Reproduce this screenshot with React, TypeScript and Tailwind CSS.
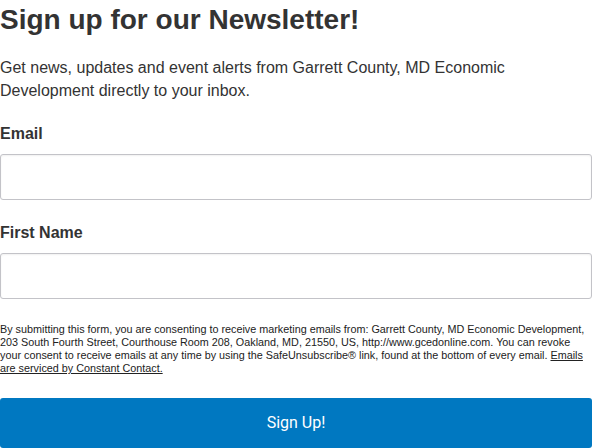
export default function App() {
  return (
    <div className="w-[592px] h-[448px] overflow-hidden bg-white text-[#333] font-['Liberation_Sans',Arial,sans-serif]">
      {/* heading */}
      <h1 className="text-[28px] font-bold leading-[34px] pt-[3px]">
        Sign up for our Newsletter!
      </h1>
      <p className="text-[16px] leading-[23px] mt-[19px] pr-[60px]">
        Get news, updates and event alerts from Garrett County, MD Economic Development directly to your inbox.
      </p>

      {/* fields */}
      <div className="mt-[22px]">
        <label className="block text-[16px] font-bold leading-[20px]">Email</label>
        <input
          type="email"
          className="block w-[592px] h-[46px] mt-[10px] border border-[#c3c3c8] rounded-[3px] bg-white shadow-[inset_0_1px_2px_rgba(0,0,0,0.06)] px-3 outline-none"
        />
      </div>
      <div className="mt-[23px]">
        <label className="block text-[16px] font-bold leading-[20px]">First Name</label>
        <input
          type="text"
          className="block w-[592px] h-[46px] mt-[10px] border border-[#c3c3c8] rounded-[3px] bg-white shadow-[inset_0_1px_2px_rgba(0,0,0,0.06)] px-3 outline-none"
        />
      </div>

      {/* disclaimer */}
      <p className="text-[10.8px] leading-[13px] text-[#222] mt-[24px]">
        By submitting this form, you are consenting to receive marketing emails from: Garrett County, MD Economic Development, 203 South Fourth Street, Courthouse Room 208, Oakland, MD, 21550, US, http://www.gcedonline.com. You can revoke your consent to receive emails at any time by using the SafeUnsubscribe® link, found at the bottom of every email.{" "}
        <a href="#" className="underline">Emails are serviced by Constant Contact.</a>
      </p>

      <button className="block w-[592px] h-[50px] mt-[23px] rounded-[3px] bg-[#0078c1] text-white text-[16px] font-['Roboto',sans-serif]">
        Sign Up!
      </button>
    </div>
  );
}
